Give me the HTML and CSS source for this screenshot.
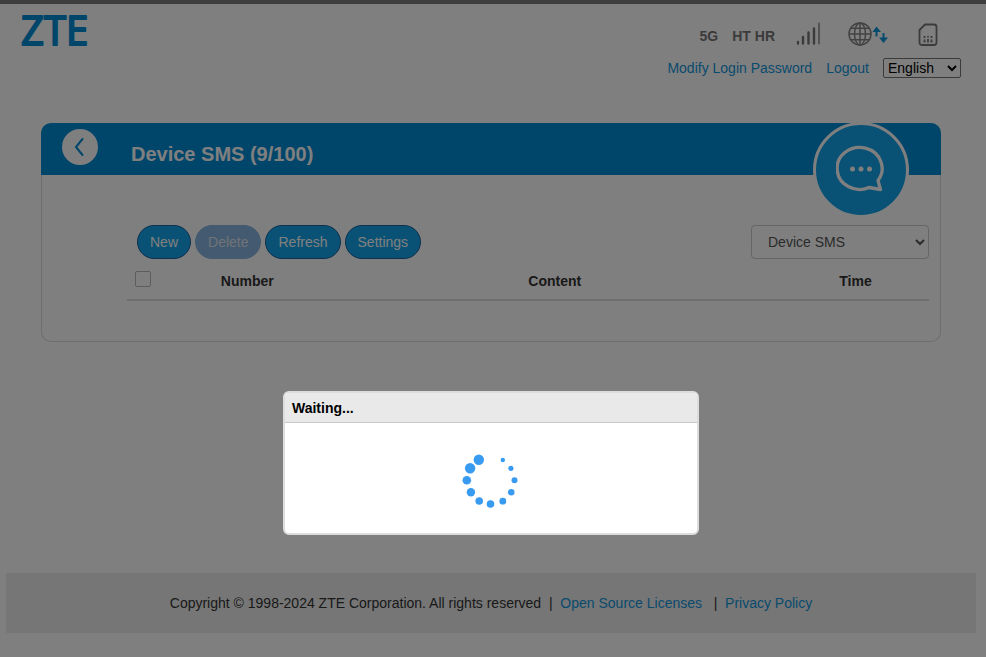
FILE: index.html
```html
<!DOCTYPE html>
<html lang="en">
<head>
    <meta charset="UTF-8">
    <meta name="viewport" content="width=device-width, initial-scale=1.0">
    <title>Device SMS</title>
    <link rel="stylesheet" href="styles.css">
</head>
<body>
    <header class="header">
        <svg class="logo" width="72" height="52" viewBox="0 0 72 52" role="img" aria-label="ZTE">
            <text x="0" y="41">ZTE</text>
        </svg>
        <div class="header-right">
            <div class="status">
                <span>5G</span>
                <span>HT HR</span>
                <div class="status-icons">
                    <svg width="24" height="24" viewBox="0 0 24 24" fill="none" stroke="#777" stroke-width="2.4" stroke-linecap="round">
                        <path d="M2 20V21.500M7 15V21.500M12.500 10.500V21.500M18 6.500V21.500"/>
                        <path d="M23 1.500V21.500" stroke="#a5a5a5" stroke-width="2"/>
                    </svg>
                    <svg width="40" height="24" viewBox="0 0 40 24" fill="none">
                        <g stroke="#858585" stroke-width="1.5">
                            <circle cx="12" cy="12" r="11"/>
                            <ellipse cx="12" cy="12" rx="5.500" ry="11"/>
                            <path d="M12 1V23M1 12H23M3 6.200H21M3 17.800H21"/>
                        </g>
                        <path d="M28.500 4.500L33 10H29.500V14.500H27.500V10H24.500Z" fill="#1296db"/>
                        <path d="M35.500 21L31 15.500H34.500V11H36.500V15.500H40Z" fill="#1296db"/>
                    </svg>
                    <svg width="20" height="24" viewBox="0 0 20 24" fill="none" stroke="#777">
                        <path d="M7 2.500H16a2.500 2.500 0 0 1 2.500 2.500V20.500a2.500 2.500 0 0 1-2.500 2.500H4A2.500 2.500 0 0 1 1.500 20.500V8Z" stroke-width="1.8" stroke-linejoin="round"/>
                        <path d="M6.500 14V16M10 14V15.500M13.500 14V16M6.500 17.500V20.500M10 17V20.500M13.500 17.500V20.500" stroke-width="1.8"/>
                    </svg>
                </div>
            </div>
            <div class="account">
                <a href="#">Modify Login Password</a>
                <a href="#">Logout</a>
                <select class="language" aria-label="Language">
                    <option>English</option>
                </select>
            </div>
        </div>
    </header>

    <main class="card">
        <div class="card-header">
            <button class="back" aria-label="Back">
                <svg width="36" height="36" viewBox="0 0 36 36" fill="none" stroke="#008cd6" stroke-width="2" stroke-linecap="round" stroke-linejoin="round">
                    <path d="M20.500 10L14 18L20.500 26"/>
                </svg>
            </button>
            <h1>Device SMS (9/100)</h1>
            <div class="badge">
                <svg width="50" height="50" viewBox="0 0 50 50">
                    <path d="M42 35.500A22.500 21 0 1 0 33 42.500L44.500 44.500Z" fill="none" stroke="#fff" stroke-width="3.300" stroke-linejoin="round"/>
                    <g fill="#fff">
                        <circle cx="16.500" cy="24" r="2.500"/>
                        <circle cx="25" cy="24" r="2.500"/>
                        <circle cx="33.500" cy="24" r="2.500"/>
                    </g>
                </svg>
            </div>
        </div>
        <div class="card-body">
            <div class="toolbar">
                <button class="btn">New</button>
                <button class="btn" disabled>Delete</button>
                <button class="btn">Refresh</button>
                <button class="btn">Settings</button>
                <select class="sms-type" aria-label="SMS type">
                    <option>Device SMS</option>
                </select>
            </div>
            <table>
                <thead>
                    <tr>
                        <th class="col-check"><input type="checkbox" class="check" aria-label="Select all"></th>
                        <th class="col-number">Number</th>
                        <th>Content</th>
                        <th class="col-time">Time</th>
                    </tr>
                </thead>
                <tbody></tbody>
            </table>
        </div>
    </main>

    <footer class="footer">
        <span>Copyright © 1998-2024 ZTE Corporation. All rights reserved &nbsp;|&nbsp; <a href="#">Open Source Licenses</a> &nbsp; |&nbsp; <a href="#">Privacy Policy</a></span>
    </footer>

    <div class="overlay">
        <div class="modal" role="dialog" aria-labelledby="modal-title">
            <h2 id="modal-title">Waiting...</h2>
            <div class="modal-body">
                <svg width="60" height="60" viewBox="0 0 60 60" fill="#399bf0">
                    <circle cx="17.800" cy="9.800" r="5.200"/>
                    <circle cx="9.100" cy="18.300" r="5.200"/>
                    <circle cx="5.800" cy="30.300" r="4.300"/>
                    <circle cx="9.900" cy="42.300" r="4.200"/>
                    <circle cx="18.200" cy="51" r="3.800"/>
                    <circle cx="29.500" cy="54" r="3.800"/>
                    <circle cx="41.800" cy="51.200" r="3.400"/>
                    <circle cx="50.200" cy="42.300" r="3.300"/>
                    <circle cx="53.500" cy="30.300" r="3"/>
                    <circle cx="49.900" cy="18.300" r="2.600"/>
                    <circle cx="41.800" cy="10" r="2.200"/>
                </svg>
            </div>
        </div>
    </div>
</body>
</html>
```

FILE: styles.css
```css
* {
    box-sizing: border-box;
}

body {
    margin: 0;
    padding: 0 10px 0 6px;
    border-top: 4px solid #7c7c7c;
    background-color: #fff;
    color: #333;
    font-family: "Liberation Sans", Arial, sans-serif;
    font-size: 14px;
    line-height: 20px;
}

a {
    color: #1296db;
    text-decoration: none;
}

svg {
    display: block;
}

button, select {
    font-family: inherit;
    font-size: 14px;
}

.header {
    display: flex;
    justify-content: space-between;
    padding: 0 15px 45px;
}

.logo {
    overflow: visible;
}

.logo text {
    font-family: "Open Sans", sans-serif;
    font-size: 40px;
    fill: #008cd6;
    stroke: #008cd6;
    stroke-width: 2px;
    stroke-linejoin: round;
}

.header-right {
    padding-top: 18px;
}

.status {
    display: flex;
    align-items: center;
    justify-content: flex-end;
    gap: 14px;
    height: 28px;
    margin-bottom: 8px;
    color: #777;
    font-weight: bold;
}

.status-icons {
    display: grid;
    grid-template-columns: repeat(3, 60px);
    justify-items: center;
    margin-left: -11px;
    padding-right: 3px;
    padding-bottom: 4px;
}

.account {
    display: flex;
    align-items: center;
    justify-content: flex-end;
    gap: 14px;
}

.language {
    width: 78px;
    height: 20px;
    padding: 0;
    border: 1px solid #767676;
    border-radius: 2px;
    background-color: #fff;
    color: #000;
}

.card {
    max-width: 900px;
    margin: 0 auto;
    border: 1px solid #ddd;
    border-top: none;
    border-radius: 10px;
}

.card-header {
    position: relative;
    display: flex;
    gap: 33px;
    height: 52px;
    margin: 0 -1px;
    padding: 6px 21px;
    border-radius: 10px 10px 0 0;
    background-color: #008cd6;
}

.card-header h1 {
    margin: 0;
    padding-top: 13px;
    color: #fff;
    font-size: 20px;
    line-height: 24px;
}

.back {
    width: 36px;
    height: 36px;
    padding: 0;
    border: none;
    border-radius: 50%;
    background-color: #fff;
    cursor: pointer;
}

.badge {
    position: absolute;
    top: -1px;
    right: 32px;
    display: flex;
    align-items: center;
    justify-content: center;
    width: 96px;
    height: 96px;
    border: 3px solid #fff;
    border-radius: 50%;
    background-color: #12a5ea;
}

.card-body {
    padding: 50px 11px 40px 85px;
}

.toolbar {
    display: flex;
    gap: 4px;
    padding-left: 10px;
    margin-bottom: 4px;
}

.btn {
    height: 34px;
    padding: 0 12px;
    border: 1px solid #20609c;
    border-radius: 17px;
    background-color: #12a5ea;
    color: #fff;
    cursor: pointer;
}

.btn:disabled {
    border-color: #88b4e0;
    background-color: #88b4e0;
    color: #dfe6ee;
    cursor: not-allowed;
}

.sms-type {
    width: 178px;
    height: 34px;
    margin-left: auto;
    padding: 0 0 0 12px;
    border: 1px solid #ccc;
    border-radius: 4px;
    background-color: #fff;
    color: #555;
}

table {
    width: 100%;
    table-layout: fixed;
    border-collapse: collapse;
}

th {
    padding: 8px;
    border-bottom: 2px solid #ddd;
    text-align: center;
}

.col-check {
    width: 5%;
    text-align: left;
    vertical-align: top;
}

.col-number {
    width: 20%;
}

.col-time {
    width: 147px;
}

.check {
    appearance: none;
    display: block;
    width: 16px;
    height: 16px;
    margin: 0;
    border: 1px solid #bbb;
    border-radius: 2px;
}

.footer {
    margin-top: 231px;
    padding: 20px;
    background-color: #ececec;
    text-align: center;
}

.overlay {
    position: fixed;
    inset: 0;
    padding: 391px 10px 0 6px;
    background-color: rgba(0, 0, 0, 0.5);
}

.modal {
    max-width: 416px;
    margin: 0 auto;
    overflow: hidden;
    border: 2px solid #ddd;
    border-radius: 6px;
    background-color: #fff;
}

.modal h2 {
    margin: 0;
    padding: 5px 7px 4px;
    border-bottom: 1px solid #c8c8c8;
    background-color: #e9e9e9;
    color: #000;
    font-size: 14px;
    line-height: 20px;
}

.modal-body {
    display: flex;
    justify-content: center;
    padding: 27px 0 23px;
}
```
